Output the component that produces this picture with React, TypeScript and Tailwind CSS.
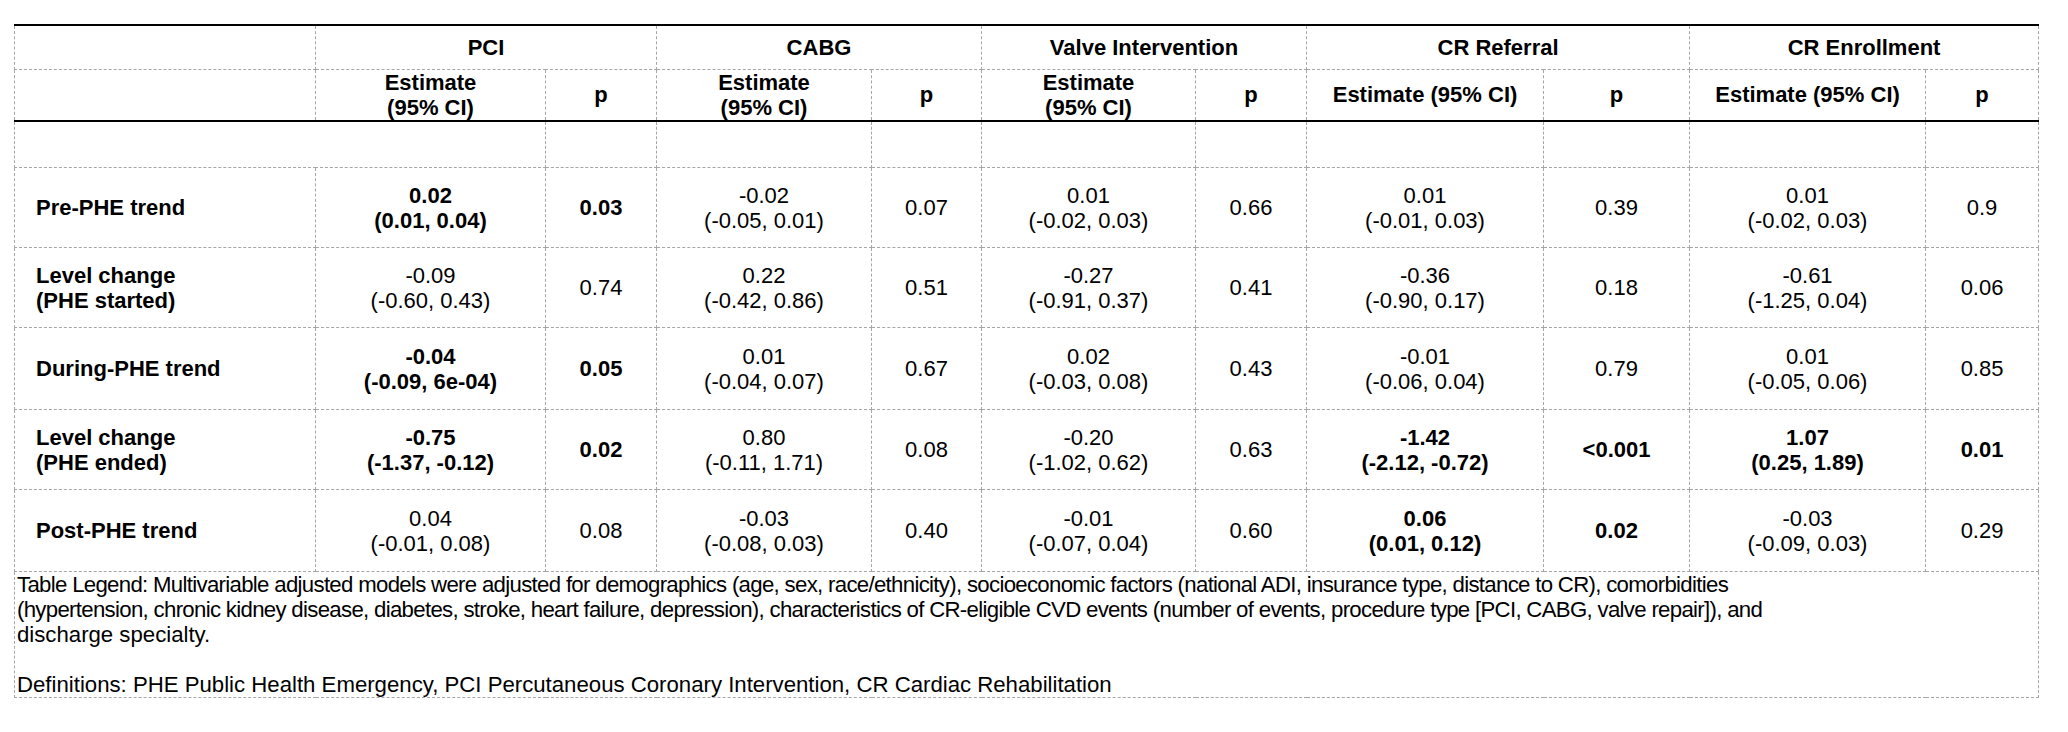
import React from "react";

type Cell = { est: string; ci: string; p: string; bold?: boolean };
type Row = { label: React.ReactNode; h: string; cells: Cell[] };

const rows: Row[] = [
  {
    label: "Pre-PHE trend",
    h: "h-[80px]",
    cells: [
      { est: "0.02", ci: "(0.01, 0.04)", p: "0.03", bold: true },
      { est: "-0.02", ci: "(-0.05, 0.01)", p: "0.07" },
      { est: "0.01", ci: "(-0.02, 0.03)", p: "0.66" },
      { est: "0.01", ci: "(-0.01, 0.03)", p: "0.39" },
      { est: "0.01", ci: "(-0.02, 0.03)", p: "0.9" },
    ],
  },
  {
    label: (
      <>
        Level change
        <br />
        (PHE started)
      </>
    ),
    h: "h-[80px]",
    cells: [
      { est: "-0.09", ci: "(-0.60, 0.43)", p: "0.74" },
      { est: "0.22", ci: "(-0.42, 0.86)", p: "0.51" },
      { est: "-0.27", ci: "(-0.91, 0.37)", p: "0.41" },
      { est: "-0.36", ci: "(-0.90, 0.17)", p: "0.18" },
      { est: "-0.61", ci: "(-1.25, 0.04)", p: "0.06" },
    ],
  },
  {
    label: "During-PHE trend",
    h: "h-[82px]",
    cells: [
      { est: "-0.04", ci: "(-0.09, 6e-04)", p: "0.05", bold: true },
      { est: "0.01", ci: "(-0.04, 0.07)", p: "0.67" },
      { est: "0.02", ci: "(-0.03, 0.08)", p: "0.43" },
      { est: "-0.01", ci: "(-0.06, 0.04)", p: "0.79" },
      { est: "0.01", ci: "(-0.05, 0.06)", p: "0.85" },
    ],
  },
  {
    label: (
      <>
        Level change
        <br />
        (PHE ended)
      </>
    ),
    h: "h-[80px]",
    cells: [
      { est: "-0.75", ci: "(-1.37, -0.12)", p: "0.02", bold: true },
      { est: "0.80", ci: "(-0.11, 1.71)", p: "0.08" },
      { est: "-0.20", ci: "(-1.02, 0.62)", p: "0.63" },
      { est: "-1.42", ci: "(-2.12, -0.72)", p: "<0.001", bold: true },
      { est: "1.07", ci: "(0.25, 1.89)", p: "0.01", bold: true },
    ],
  },
  {
    label: "Post-PHE trend",
    h: "h-[82px]",
    cells: [
      { est: "0.04", ci: "(-0.01, 0.08)", p: "0.08" },
      { est: "-0.03", ci: "(-0.08, 0.03)", p: "0.40" },
      { est: "-0.01", ci: "(-0.07, 0.04)", p: "0.60" },
      { est: "0.06", ci: "(0.01, 0.12)", p: "0.02", bold: true },
      { est: "-0.03", ci: "(-0.09, 0.03)", p: "0.29" },
    ],
  },
];

const groups = ["PCI", "CABG", "Valve Intervention", "CR Referral", "CR Enrollment"];

const td = "border border-dashed border-[#a6a6a6] p-0 text-center align-middle";

export default function App() {
  return (
    <div className="min-h-screen bg-white pt-[24px] pl-[14px] font-['Liberation_Sans',Arial,sans-serif] text-[22px] leading-[25px] text-black">
      <table className="w-[2024px] table-fixed border-collapse border-t-2 border-black">
        <colgroup>
          <col className="w-[301px]" />
          <col className="w-[230px]" />
          <col className="w-[111px]" />
          <col className="w-[215px]" />
          <col className="w-[110px]" />
          <col className="w-[214px]" />
          <col className="w-[111px]" />
          <col className="w-[237px]" />
          <col className="w-[146px]" />
          <col className="w-[236px]" />
          <col className="w-[113px]" />
        </colgroup>
        <thead className="border-b-2 border-black">
          <tr className="h-[44px]">
            <td className={td} />
            {groups.map((g) => (
              <td key={g} colSpan={2} className={`${td} font-bold`}>
                {g}
              </td>
            ))}
          </tr>
          <tr className="h-[51px]">
            <td className={td} />
            {groups.map((g, i) => (
              <React.Fragment key={g}>
                <td className={`${td} font-bold`}>
                  {i < 3 ? (
                    <>
                      Estimate
                      <br />
                      (95% CI)
                    </>
                  ) : (
                    "Estimate (95% CI)"
                  )}
                </td>
                <td className={`${td} font-bold`}>p</td>
              </React.Fragment>
            ))}
          </tr>
        </thead>
        <tbody>
          <tr className="h-[47px]">
            <td colSpan={2} className={td} />
            {Array.from({ length: 9 }).map((_, i) => (
              <td key={i} className={td} />
            ))}
          </tr>
          {rows.map((r, ri) => (
            <tr key={ri} className={r.h}>
              <td className={`${td} !text-left pl-[21px] font-bold`}>{r.label}</td>
              {r.cells.map((c, ci) => (
                <React.Fragment key={ci}>
                  <td className={`${td} ${c.bold ? "font-bold" : ""}`}>
                    {c.est}
                    <br />
                    {c.ci}
                  </td>
                  <td className={`${td} ${c.bold ? "font-bold" : ""}`}>{c.p}</td>
                </React.Fragment>
              ))}
            </tr>
          ))}
          <tr>
            <td colSpan={11} className="border border-dashed border-[#a6a6a6] p-0 text-left align-top">
              <div className="h-[125px] pl-[2px] whitespace-nowrap text-[22.2px] leading-[25px]">
                <div className="tracking-[-0.68px]">
                  Table Legend: Multivariable adjusted models were adjusted for demographics (age, sex, race/ethnicity),
                  socioeconomic factors (national ADI, insurance type, distance to CR), comorbidities
                </div>
                <div className="tracking-[-0.68px]">
                  (hypertension, chronic kidney disease, diabetes, stroke, heart failure, depression), characteristics of
                  CR-eligible CVD events (number of events, procedure type [PCI, CABG, valve repair]), and
                </div>
                <div>discharge specialty.</div>
                <div className="h-[25px]" />
                <div>Definitions: PHE Public Health Emergency, PCI Percutaneous Coronary Intervention, CR Cardiac Rehabilitation</div>
              </div>
            </td>
          </tr>
        </tbody>
      </table>
    </div>
  );
}
